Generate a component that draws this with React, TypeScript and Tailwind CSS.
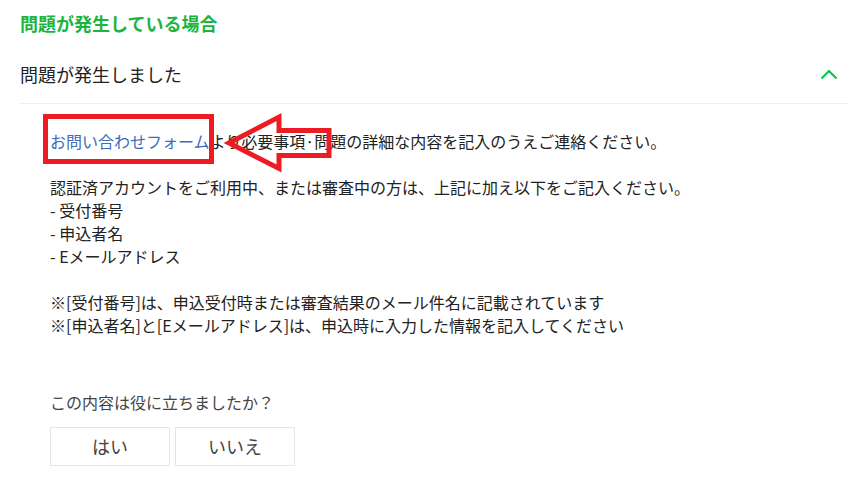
import React from "react";

export default function App() {
  const font = { fontFamily: '"Noto Sans CJK JP", "Noto Sans", sans-serif' };
  return (
    <div className="relative w-[861px] h-[491px] bg-white overflow-hidden" style={font}>
      <div className="pt-[10px] pl-[20px] pr-[13px]">
        <h2 className="text-[18px] leading-[27px] font-bold text-[#1cb43c] mb-[9px]">
          問題が発生している場合
        </h2>
        <div className="h-[58px] flex items-center justify-between border-b border-[#eeeeee]">
          <span className="text-[18px] leading-[27px] text-[#222222]">問題が発生しました</span>
          <svg width="18" height="11" viewBox="0 0 18 11" className="mr-[10px]" fill="none">
            <path d="M1.5 9.5 L9 2 L16.5 9.5" stroke="#06c755" strokeWidth="2.2" />
          </svg>
        </div>
        <div className="pl-[30px] pt-[26px] text-[16px] leading-[23px] text-[#222222]">
          <p>
            <a className="text-[#3e6bbd]">お問い合わせフォーム</a>より必要事項·問題の詳細な内容を記入のうえご連絡ください。
          </p>
          <p className="h-[23px]"></p>
          <p>認証済アカウントをご利用中、または審査中の方は、上記に加え以下をご記入ください。</p>
          <p>- 受付番号</p>
          <p>- 申込者名</p>
          <p>- Eメールアドレス</p>
          <p className="h-[23px]"></p>
          <p>※[受付番号]は、申込受付時または審査結果のメール件名に記載されています</p>
          <p>※[申込者名]と[Eメールアドレス]は、申込時に入力した情報を記入してください</p>
          <p className="mt-[54px] text-[#444444]">この内容は役に立ちましたか？</p>
          <div className="mt-[13px] flex gap-[5px]">
            <button className="w-[120px] h-[39px] border border-[#e6e6e6] text-[18px] text-[#444444] flex items-center justify-center">
              はい
            </button>
            <button className="w-[120px] h-[39px] border border-[#e6e6e6] text-[18px] text-[#444444] flex items-center justify-center">
              いいえ
            </button>
          </div>
        </div>
      </div>
      <div className="absolute left-[43px] top-[114px] w-[171px] h-[50px] border-[5px] border-[#ed1c24] pointer-events-none" />
      <svg className="absolute left-0 top-0 pointer-events-none" width="861" height="491" fill="none">
        <path
          d="M229 143 L279 117 L279 130.5 L329 130.5 L329 155.5 L279 155.5 L279 168.5 Z"
          stroke="#ed1c24"
          strokeWidth="5"
          strokeLinejoin="miter"
        />
      </svg>
    </div>
  );
}
